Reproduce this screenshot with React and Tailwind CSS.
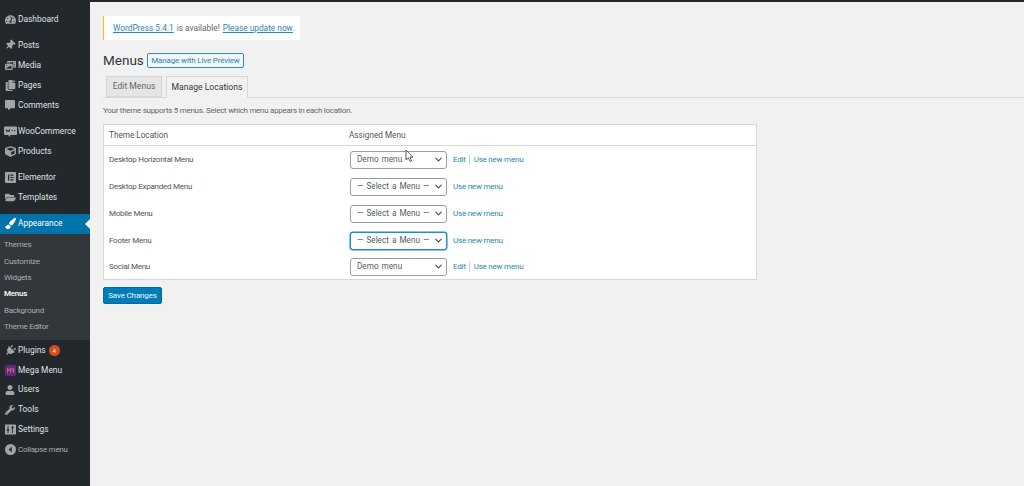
import React from 'react';
import { FaTachometerAlt, FaThumbtack, FaPhotoVideo, FaCopy, FaCommentAlt, FaCube, FaFolderOpen, FaPaintBrush, FaPlug, FaUser, FaWrench } from 'react-icons/fa';
import { ChevronDown } from 'lucide-react';

const Woo = () => (
  <svg width="13" height="11" viewBox="0 0 13 11"><rect x="0" y="0.5" width="13" height="8.5" rx="1" fill="#a0a5aa" /><path d="M4 9l2 2V9z" fill="#a0a5aa" /><path d="M2 3l1 3 1-2 1 2 1-3M7.5 4.5h1.5M10 4.5h1.5" stroke="#23282d" strokeWidth="0.8" fill="none" /></svg>
);
const Elementor = () => (
  <svg width="11" height="11" viewBox="0 0 11 11"><rect width="11" height="11" rx="1" fill="#a0a5aa" /><path d="M3 2.5h1.2v6H3zM5.3 2.5H8.5v1.2H5.3zM5.3 4.9H8.5v1.2H5.3zM5.3 7.3H8.5v1.2H5.3z" fill="#23282d" /></svg>
);
const Mega = () => (
  <svg width="11" height="11" viewBox="0 0 11 11"><rect width="11" height="11" rx="2" fill="#5b2d78" /><path d="M2.5 8V3l1.5 3 1.5-3v5M7 3v3h2M8.5 3v5" stroke="#d0527e" strokeWidth="1" fill="none" /></svg>
);
const Collapse = () => (
  <svg width="11" height="11" viewBox="0 0 11 11"><circle cx="5.5" cy="5.5" r="5.5" fill="#a0a5aa" /><path d="M6.8 2.8v5.4L3.6 5.5z" fill="#23282d" /></svg>
);
const Settings = () => (
  <svg width="11" height="11" viewBox="0 0 11 11"><rect width="11" height="10" y="0.5" rx="0.8" fill="#a0a5aa" /><path d="M3 2v7M7.5 2v7" stroke="#23282d" strokeWidth="0.9" /><path d="M1.8 6h2.4M6.3 3.6h2.4" stroke="#23282d" strokeWidth="1.3" /></svg>
);

const ic = (I, s = 11, c = '') => <I size={s} color="#a0a5aa" className={c} />;

const Item = ({ icon, label, active, children, className = '' }) => (
  <div className={`flex items-center h-[20px] pl-[3px] whitespace-nowrap ${active ? 'bg-[#0073aa] text-white relative' : 'text-[#dfe1e3]'} ${className}`}>
    <span className="w-[14px] flex justify-center shrink-0">{icon}</span>
    <span className="ml-[1px] text-[8.4px]">{label}</span>
    {children}
  </div>
);

const Sub = ({ label, current }) => (
  <div className={`h-[16.4px] flex items-center pl-[4px] text-[8px] tracking-[-0.25px] whitespace-nowrap ${current ? 'text-white font-medium' : 'text-[#a9aeb3]'}`}>{label}</div>
);

const Select = ({ label, focus }) => (
  <div className={`w-[97px] h-[18px] rounded-[3px] bg-white flex items-center justify-between pl-[6px] pr-[2px] text-[8.2px] text-[#555b60] whitespace-nowrap border [word-spacing:1px] ${focus ? 'border-[#1f8fc4] shadow-[0_0_0_0.5px_#1f8fc4]' : 'border-[#989ea4]'}`}>
    <span>{label}</span>
    <ChevronDown size={11} strokeWidth={2.25} color="#3f454a" />
  </div>
);

const Row = ({ name, label, edit, focus }) => (
  <div className="flex items-center h-[27px] last:h-[25px] pl-[5px] whitespace-nowrap">
    <span className="w-[241px] text-[8px] tracking-[-0.25px] text-[#50555a] pt-[1px]">{name}</span>
    <Select label={label} focus={focus} />
    <div className="ml-[6px] text-[8px] tracking-[-0.22px] text-[#2a86b4] flex items-center">
      {edit && <><span>Edit</span><span className="mx-[3.5px] w-px h-[10px] bg-[#ccd0d4]" /></>}
      <span>Use new menu</span>
    </div>
  </div>
);

export default function App() {
  return (
    <div className="relative w-[1024px] h-[486px] overflow-hidden bg-[#f1f1f1] flex flex-col font-['Roboto','Noto_Sans',sans-serif]">
      <div className="h-[2px] bg-[#23282d] shrink-0" />
      <div className="flex flex-1 min-h-0">
        <aside className="w-[90px] bg-[#23282d] shrink-0 pt-[7px]">
          <Item icon={ic(FaTachometerAlt)} label="Dashboard" />
          <Item className="mt-[6px]" icon={ic(FaThumbtack, 10, 'rotate-45')} label="Posts" />
          <Item icon={ic(FaPhotoVideo)} label="Media" />
          <Item icon={ic(FaCopy)} label="Pages" />
          <Item className="-mb-[0.5px]" icon={ic(FaCommentAlt, 10)} label="Comments" />
          <Item className="mt-[7px]" icon={<Woo />} label="WooCommerce" />
          <Item icon={ic(FaCube)} label="Products" />
          <Item className="mt-[6px]" icon={<Elementor />} label="Elementor" />
          <Item icon={ic(FaFolderOpen)} label="Templates" />
          <Item className="mt-[6px]" active icon={<FaPaintBrush size={11} color="#fff" />} label="Appearance">
            <span className="absolute right-0 top-[5px] border-y-[5px] border-y-transparent border-r-[5px] border-r-[#f1f1f1]" />
          </Item>
          <div className="bg-[#32373c] h-[106px] pt-[3.5px]">
            <Sub label="Themes" />
            <Sub label="Customize" />
            <Sub label="Widgets" />
            <Sub label="Menus" current />
            <Sub label="Background" />
            <Sub label="Theme Editor" />
          </div>
          <Item className="mt-[1px]" icon={ic(FaPlug, 11, 'rotate-45')} label="Plugins">
            <span className="ml-[3px] w-[11px] h-[11px] rounded-full bg-[#d54e21] text-white text-[6px] flex items-center justify-center">4</span>
          </Item>
          <Item icon={<Mega />} label="Mega Menu" />
          <Item className="-mt-[1px]" icon={ic(FaUser, 10)} label="Users" />
          <Item icon={ic(FaWrench, 10)} label="Tools" />
          <Item icon={<Settings />} label="Settings" />
          <div className="flex items-center h-[20px] pl-[3px] text-[#a9aeb3] whitespace-nowrap">
            <span className="w-[14px] flex justify-center"><Collapse /></span>
            <span className="ml-[1px] text-[8px] tracking-[-0.25px]">Collapse menu</span>
          </div>
        </aside>
        <main className="flex-1 min-w-0 pl-[13px] pt-[14px]">
          <div className="w-[197px] h-[24px] bg-white border-l border-l-[#ffb900] pl-[9px] flex items-center text-[8.3px] text-[#666] whitespace-nowrap">
            <span className="text-[#2a86b4] underline">WordPress 5.4.1</span>
            <span className="mx-[3px]">is available!</span>
            <span className="text-[#2a86b4] underline">Please update now</span>
            <span>.</span>
          </div>
          <div className="flex items-center mt-[13px] h-[15px] whitespace-nowrap">
            <span className="text-[13.5px] text-[#32373c] leading-none w-[44px]">Menus</span>
            <span className="w-[97px] h-[15px] rounded-[2px] border border-[#2f8fb8] bg-[#f3f5f6] text-[#2a86b4] text-[8px] tracking-[-0.15px] flex items-center justify-center">Manage with Live Preview</span>
          </div>
          <div className="flex mt-[8px] h-[22px] border-b border-b-[#d5d7da] pl-[3px] gap-[4px] whitespace-nowrap">
            <span className="w-[56px] h-[21px] border border-[#d5d7da] bg-[#e5e5e5] text-[#666] text-[8.6px] flex items-center justify-center">Edit Menus</span>
            <span className="w-[82px] h-[22px] border border-[#d5d7da] border-b-[#f1f1f1] bg-[#f1f1f1] text-[#32373c] text-[8.6px] flex items-center justify-center">Manage Locations</span>
          </div>
          <p className="text-[8px] tracking-[-0.28px] text-[#666] mt-[7px] h-[12px] leading-[12px] whitespace-nowrap">Your theme supports 5 menus. Select which menu appears in each location.</p>
          <div className="mt-[7px] w-[654px] h-[156px] bg-white border border-[#d5d7da]">
            <div className="flex items-center h-[21px] border-b border-b-[#d5d7da] pl-[5px] text-[8.2px] text-[#50555a] whitespace-nowrap">
              <span className="w-[240px]">Theme Location</span>
              <span>Assigned Menu</span>
            </div>
            <Row name="Desktop Horizontal Menu" label="Demo menu" edit />
            <Row name="Desktop Expanded Menu" label="— Select a Menu —" />
            <Row name="Mobile Menu" label="— Select a Menu —" />
            <Row name="Footer Menu" label="— Select a Menu —" focus />
            <Row name="Social Menu" label="Demo menu" edit />
          </div>
          <div className="mt-[7px] w-[59px] h-[17px] rounded-[2px] bg-[#007cba] border border-[#006ba1] text-[#eef6fa] text-[8px] tracking-[-0.15px] flex items-center justify-center whitespace-nowrap">Save Changes</div>
        </main>
      </div>
      <svg className="absolute left-[405px] top-[149px]" width="9" height="14" viewBox="0 0 9 14"><path d="M1 1v10l2.4-2.2L5 12.5l1.6-.7L5 8.2h3z" fill="#fff" stroke="#333" strokeWidth="0.8" /></svg>
    </div>
  );
}
